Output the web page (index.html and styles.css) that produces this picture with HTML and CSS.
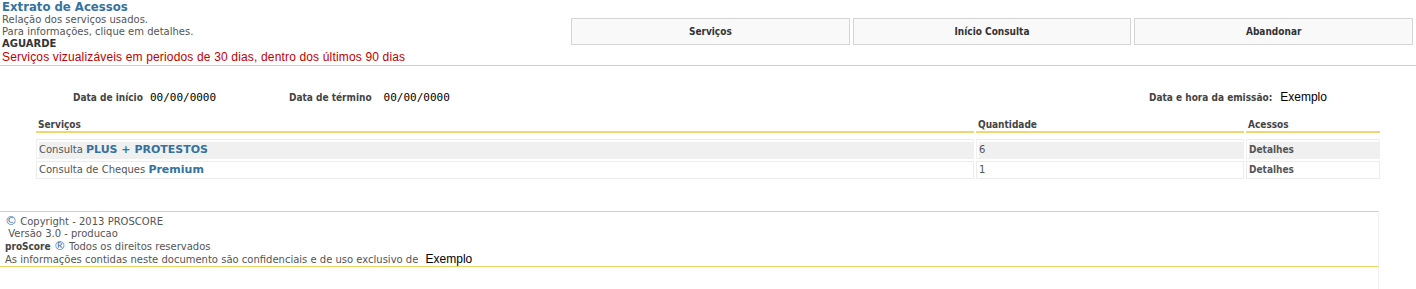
FILE: index.html
```html
<!DOCTYPE html>
<html lang="pt">
<head>
<meta charset="utf-8">
<title>Extrato de Acessos</title>
<link rel="stylesheet" href="styles.css">
</head>
<body>
<div class="header">
  <div class="intro">
    <div class="title">Extrato de Acessos</div>
    <div class="line">Relação dos serviços usados.</div>
    <div class="line">Para informações, clique em detalhes.</div>
    <div class="line strong">AGUARDE</div>
    <div class="warn">Serviços vizualizáveis em periodos de 30 dias, dentro dos últimos 90 dias</div>
  </div>
  <div class="actions">
    <button class="btn">Serviços</button>
    <button class="btn">Início Consulta</button>
    <button class="btn">Abandonar</button>
  </div>
</div>
<div class="rule"></div>

<div class="dates">
  <div class="dgroup g1"><span class="dlabel">Data de início</span><span class="dvalue">00/00/0000</span></div>
  <div class="dgroup g2"><span class="dlabel">Data de término</span><span class="dvalue">00/00/0000</span></div>
  <div class="dgroup g3"><span class="dlabel">Data e hora da emissão:</span><span class="evalue">Exemplo</span></div>
</div>

<table class="grid">
  <thead>
    <tr class="head"><th class="c1">Serviços</th><th class="c2">Quantidade</th><th class="c3">Acessos</th></tr>
    <tr class="spacer"><th colspan="3"></th></tr>
  </thead>
  <tbody>
    <tr class="odd"><td>Consulta <b class="prod">PLUS + PROTESTOS</b></td><td>6</td><td class="det">Detalhes</td></tr>
    <tr><td>Consulta de Cheques <b class="prod">Premium</b></td><td>1</td><td class="det">Detalhes</td></tr>
  </tbody>
</table>

<div class="footer">
  <div class="fline first"><span class="sym">©</span> Copyright - 2013 PROSCORE</div>
  <div class="fline">&nbsp;Versão 3.0 - producao</div>
  <div class="fline"><b class="brand">proScore</b> <span class="sym">®</span> Todos os direitos reservados</div>
  <div class="fline">As informações contidas neste documento são confidenciais e de uso exclusivo de <span class="evalue owner">Exemplo</span></div>
</div>
<div class="tail"></div>
</body>
</html>
```
FILE: styles.css
```css
html, body {
  margin: 0;
  padding: 0;
  background: #fff;
}
body {
  font-family: "DejaVu Sans", Verdana, sans-serif;
  font-size: 10px;
  color: #555;
}
.header {
  display: flex;
  align-items: flex-start;
}
.rule {
  height: 1px;
  background: #efd263;
}
.intro {
  flex: 1;
  padding-left: 2px;
}
.title {
  font-family: "DejaVu Sans Condensed", Verdana, sans-serif;
  font-size: 13px;
  font-weight: bold;
  color: #34729f;
  line-height: 14px;
}
.line {
  line-height: 12px;
  height: 12px;
}
.strong {
  font-weight: bold;
  color: #333;
}
.warn {
  font-family: "Liberation Sans", Arial, sans-serif;
  font-size: 12px;
  letter-spacing: 0.16px;
  line-height: 14px;
  height: 14px;
  color: #c00000;
  padding-bottom: 1px;
}
.actions {
  display: flex;
  gap: 3px;
  width: 842px;
  margin-right: 3px;
  margin-top: 18px;
}
.btn {
  flex: 1;
  height: 27px;
  margin: 0;
  border: 1px solid #d4d4d4;
  background: #f9f9f9;
  font-family: "DejaVu Sans Condensed", Tahoma, sans-serif;
  font-weight: bold;
  font-size: 10px;
  color: #333;
  padding: 0;
}
.dates {
  display: flex;
  align-items: center;
  margin-top: 23px;
  height: 16px;
  padding-left: 73px;
}
.dgroup {
  display: flex;
  align-items: center;
}
.g1 { width: 216px; }
.g2 { flex: 1; }
.g3 { width: 267px; }
.dlabel {
  font-family: "DejaVu Sans Condensed", Tahoma, sans-serif;
  font-weight: bold;
  font-size: 10px;
  color: #444;
}
.g1 .dlabel { margin-right: 7px; }
.g2 .dlabel { margin-right: 12px; }
.g3 .dlabel { margin-right: 8px; }
.dvalue {
  font-family: "DejaVu Sans Mono", "Lucida Console", monospace;
  font-size: 11px;
  color: #000;
}
.evalue {
  font-family: "Liberation Sans", Arial, sans-serif;
  font-size: 12px;
  color: #000;
}
.grid {
  margin-top: 10px;
  margin-left: 34px;
  width: 1348px;
  border-collapse: separate;
  border-spacing: 2px;
  table-layout: fixed;
}
.grid .head th {
  text-align: left;
  font-family: "DejaVu Sans Condensed", Tahoma, sans-serif;
  font-weight: bold;
  font-size: 10px;
  color: #444;
  height: 14px;
  padding: 0 0 0 2px;
  border-bottom: 2px solid #f2d670;
}
.grid th.c1 { width: 936px; }
.grid th.c2 { width: 266px; }
.grid .spacer th {
  height: 2px;
  padding: 0;
  border: 0;
}
.grid td {
  border: 1px solid #ececec;
  height: 16px;
  padding: 0 0 0 2px;
  line-height: 16px;
  color: #555;
}
.grid tr.odd td {
  background: #f0f0f0;
  background-clip: content-box;
  border-color: #f0f0f0;
  border-top-color: #ececec;
  padding-top: 2px;
}
.prod {
  font-size: 11px;
  color: #34729f;
}
.det {
  font-family: "DejaVu Sans Condensed", Tahoma, sans-serif;
  font-weight: bold;
  color: #444;
}
.footer {
  margin-top: 30px;
  width: 1379px;
  border-top: 1px solid #efd263;
  border-bottom: 1px solid #efd263;
  border-right: 1px solid #f0f0f0;
  padding: 3px 0 0 5px;
  box-sizing: border-box;
}
.fline {
  line-height: 13px;
  height: 13px;
  white-space: nowrap;
}
.fline.first {
  line-height: 12px;
  height: 12px;
}
.sym {
  color: #2f6fae;
  font-size: 12px;
}
.brand {
  color: #444;
  font-family: "DejaVu Sans Condensed", Tahoma, sans-serif;
}
.owner {
  margin-left: 4px;
}
.tail {
  width: 1379px;
  height: 22px;
  border-right: 1px solid #f0f0f0;
  box-sizing: border-box;
}
```
